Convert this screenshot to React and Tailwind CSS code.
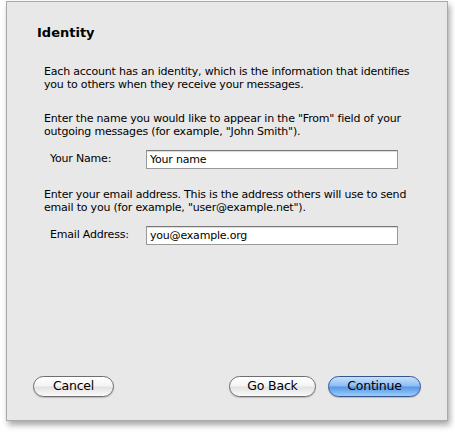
import React from "react";

const font = { fontFamily: '"Lucida Grande", "DejaVu Sans", sans-serif' };

const Field = ({ label, value }) => (
  <div className="flex items-center">
    <label className="w-[101px] pl-[5px] text-[11px] tracking-[-0.2px] text-black">{label}</label>
    <input
      readOnly
      value={value}
      className="w-[252px] h-[19px] border border-[#9a9a9a] border-t-[#777] bg-white px-[3px] text-[11px] tracking-[-0.2px] text-black outline-none shadow-[inset_0_1px_1px_rgba(0,0,0,0.15)]"
    />
  </div>
);

const PillButton = ({ children, primary, className = "" }) => (
  <button
    className={`h-[21px] rounded-full border text-[12.5px] tracking-[-0.2px] leading-none ${
      primary
        ? "border-[#34568f] bg-[linear-gradient(to_bottom,#c8e0fb_0%,#8cbcf3_48%,#5596e8_52%,#9ccdfa_100%)] text-black"
        : "border-[#6e6e6e] bg-[linear-gradient(to_bottom,#ffffff_0%,#f4f4f4_48%,#e2e2e2_52%,#fafafa_100%)] text-black"
    } shadow-[0_1px_1px_rgba(0,0,0,0.2)] ${className}`}
  >
    {children}
  </button>
);

export default function App() {
  return (
    <div className="w-[455px] h-[432px] bg-white pt-[1px] pl-[6px]" style={font}>
      <div className="w-[442px] h-[420px] border border-[#a9a9a9] bg-[#e8e8e8] shadow-[2px_4px_6px_rgba(0,0,0,0.35)] flex flex-col">
        <h1 className="ml-[30px] mt-[21px] text-[13px] font-bold text-black">Identity</h1>

        <div className="ml-[37px] mt-[22px] text-[11px] tracking-[-0.2px] leading-[13px] text-black">
          <p>
            Each account has an identity, which is the information that identifies
            <br />
            you to others when they receive your messages.
          </p>
          <p className="mt-[21px]">
            Enter the name you would like to appear in the "From" field of your
            <br />
            outgoing messages (for example, "John Smith").
          </p>
        </div>

        <div className="ml-[38px] mt-[12px]">
          <Field label="Your Name:" value="Your name" />
        </div>

        <p className="ml-[37px] mt-[19px] text-[11px] tracking-[-0.2px] leading-[13px] text-black">
          Enter your email address. This is the address others will use to send
          <br />
          email to you (for example, "user@example.net").
        </p>

        <div className="ml-[38px] mt-[12px]">
          <Field label="Email Address:" value="you@example.org" />
        </div>

        <div className="mt-auto mb-[23px] flex items-center px-[26px]">
          <PillButton className="w-[81px]">Cancel</PillButton>
          <div className="flex-1" />
          <PillButton className="w-[87px]">Go Back</PillButton>
          <PillButton primary className="ml-[12px] w-[93px]">
            Continue
          </PillButton>
        </div>
      </div>
    </div>
  );
}
